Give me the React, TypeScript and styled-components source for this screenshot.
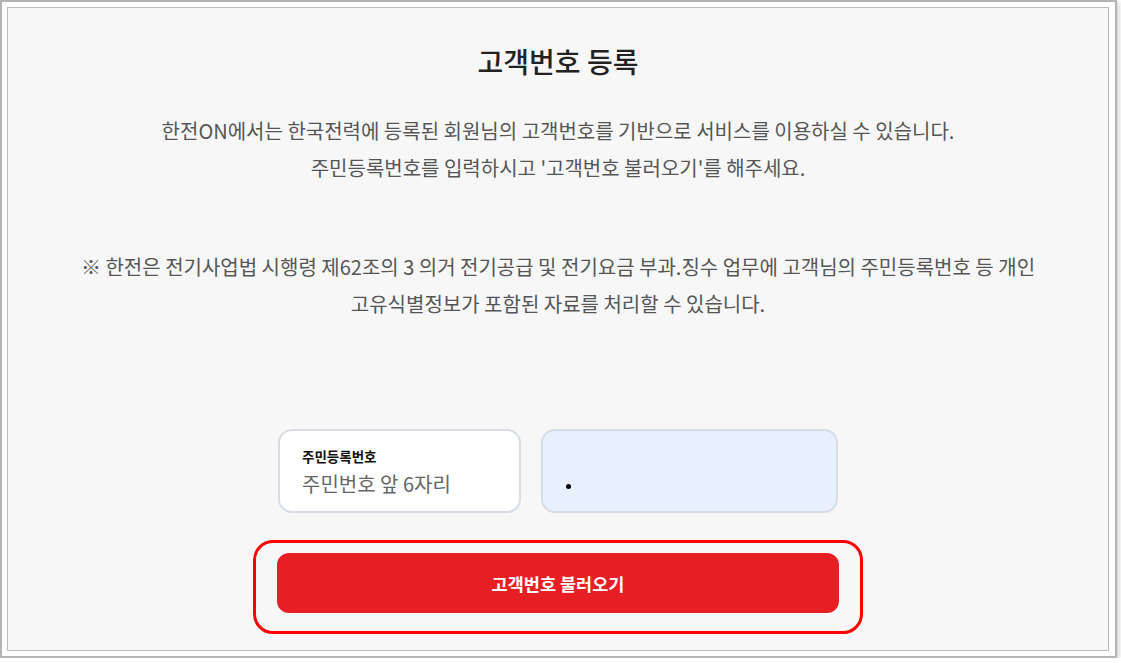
import React from "react";
import styled, { createGlobalStyle } from "styled-components";

const Global = createGlobalStyle`
  html, body { margin: 0; padding: 0; background: #ffffff; }
  body { font-family: "Noto Sans CJK KR", "Noto Sans", sans-serif; }
  * { box-sizing: border-box; }
`;

const Outer = styled.div`
  width: 1117px;
  height: 658px;
  border: 2px solid #b4b4b4;
  background: #ffffff;
  padding: 5px 6px 5px 5px;
  box-shadow: 2px 2px 4px rgba(0, 0, 0, 0.18);
`;

const Inner = styled.div`
  height: 100%;
  border: 1px solid #bcbcbc;
  background: #f7f7f7;
  display: flex;
  flex-direction: column;
  align-items: center;
  padding-top: 33px;
`;

const Title = styled.h1`
  margin: 0;
  font-size: 28px;
  line-height: 40px;
  font-weight: 500;
  color: #222;
`;

const Para = styled.p<{ $top: number }>`
  margin: ${(p) => p.$top}px 0 0;
  font-size: 20px;
  line-height: 36.5px;
  color: #555;
  text-align: center;
  white-space: nowrap;
`;

const InputRow = styled.div`
  margin-top: 107px;
  display: flex;
  gap: 20px;
`;

const Field = styled.div<{ $w: number; $filled?: boolean }>`
  width: ${(p) => p.$w}px;
  height: 84px;
  border: 2px solid #d8dce6;
  border-radius: 14px;
  background: ${(p) => (p.$filled ? "#e8f0fe" : "#ffffff")};
  padding: 16px 22px 0;
  display: flex;
  flex-direction: column;
`;

const Label = styled.span`
  font-size: 13.5px;
  font-weight: 700;
  line-height: 18px;
  color: #111;
`;

const Placeholder = styled.span`
  font-size: 20px;
  line-height: 30px;
  margin-top: 4px;
  color: #666;
`;

const Dot = styled.span`
  margin-top: 37px;
  margin-left: 1px;
  width: 5px;
  height: 5px;
  border-radius: 50%;
  background: #000;
`;

const Focus = styled.div`
  margin-top: 27px;
  width: 610px;
  border: 3px solid #ff0000;
  border-radius: 20px;
  padding: 10px 21px 18px;
`;

const Button = styled.button`
  width: 100%;
  height: 60px;
  border: none;
  border-radius: 12px;
  background: #e81e25;
  color: #fff;
  font-family: inherit;
  font-size: 17.5px;
  font-weight: 700;
  cursor: pointer;
`;

export default function App() {
  return (
    <>
      <Global />
      <Outer>
        <Inner>
          <Title>고객번호 등록</Title>
          <Para $top={32}>
            한전ON에서는 한국전력에 등록된 회원님의 고객번호를 기반으로 서비스를 이용하실 수 있습니다.
            <br />
            주민등록번호를 입력하시고 '고객번호 불러오기'를 해주세요.
          </Para>
          <Para $top={63}>
            ※ 한전은 전기사업법 시행령 제62조의 3 의거 전기공급 및 전기요금 부과.징수 업무에 고객님의 주민등록번호 등 개인
            <br />
            고유식별정보가 포함된 자료를 처리할 수 있습니다.
          </Para>
          <InputRow>
            <Field $w={243}>
              <Label>주민등록번호</Label>
              <Placeholder>주민번호 앞 6자리</Placeholder>
            </Field>
            <Field $w={297} $filled>
              <Dot />
            </Field>
          </InputRow>
          <Focus>
            <Button>고객번호 불러오기</Button>
          </Focus>
        </Inner>
      </Outer>
    </>
  );
}
